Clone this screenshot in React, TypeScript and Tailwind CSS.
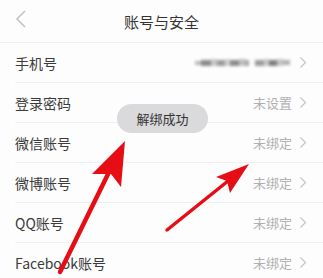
import React from "react";

const rows = [
  { label: "手机号", value: "" },
  { label: "登录密码", value: "未设置" },
  { label: "微信账号", value: "未绑定" },
  { label: "微博账号", value: "未绑定" },
  { label: "QQ账号", value: "未绑定" },
  { label: "Facebook账号", value: "未绑定" },
];

function Chevron() {
  return (
    <svg width="8" height="13" viewBox="0 0 8 13" className="ml-[7px]">
      <path d="M1.5 1.5 L6.5 6.5 L1.5 11.5" fill="none" stroke="#c4c4c4" strokeWidth="1.2" />
    </svg>
  );
}

export default function App() {
  return (
    <div
      className="relative w-[323px] h-[278px] overflow-hidden bg-[#fdfdfd]"
      style={{ fontFamily: '"Noto Sans CJK SC", "Noto Sans", sans-serif' }}
    >
      <div className="relative h-[43px] flex items-center justify-center border-b border-[#efefef]">
        <svg width="12" height="20" viewBox="0 0 12 20" className="absolute left-[15px] top-[9px]">
          <path d="M10 2 L2 10 L10 18" fill="none" stroke="#c0c0c0" strokeWidth="1.5" />
        </svg>
        <span className="text-[15px] text-[#333] leading-none">账号与安全</span>
      </div>
      <div className="flex flex-col">
        {rows.map((r, i) => (
          <div key={i} className="ml-[15px] h-[40px] flex items-center border-b border-[#f0f0f0] pr-[16px]">
            <span className="text-[14px] text-[#3a3a3a] leading-none">{r.label}</span>
            <div className="flex-1" />
            {i === 0 ? (
              <div className="flex items-center gap-[6px] blur-[1.6px] mr-[2px]">
                <div className="flex items-center h-[9px]">
                  <div className="w-[6px] h-[4px] bg-[#b8b8b8]" />
                  <div className="w-[10px] h-[6px] bg-[#8a8a8a]" />
                  <div className="w-[6px] h-[7px] bg-[#c8c8c8]" />
                  <div className="w-[8px] h-[6px] bg-[#9a9a9a]" />
                  <div className="w-[5px] h-[7px] bg-[#cfcfcf]" />
                  <div className="w-[9px] h-[6px] bg-[#8a8a8a]" />
                  <div className="w-[6px] h-[7px] bg-[#c0c0c0]" />
                  <div className="w-[4px] h-[6px] bg-[#a8a8a8]" />
                </div>
                <div className="flex items-center h-[9px]">
                  <div className="w-[9px] h-[6px] bg-[#9c9c9c]" />
                  <div className="w-[5px] h-[7px] bg-[#c8c8c8]" />
                  <div className="w-[8px] h-[6px] bg-[#7e7e7e]" />
                  <div className="w-[6px] h-[7px] bg-[#c4c4c4]" />
                  <div className="w-[7px] h-[5px] bg-[#b0b0b0]" />
                </div>
              </div>
            ) : (
              <span className="text-[13px] text-[#b0b0b0] leading-none">{r.value}</span>
            )}
            <Chevron />
          </div>
        ))}
      </div>
      <div className="absolute left-[117px] top-[104px] w-[91px] h-[29px] rounded-full bg-[#dadadc] flex items-center justify-center">
        <span className="text-[13px] text-[#333] leading-none">解绑成功</span>
      </div>
      <svg className="absolute left-0 top-0" width="323" height="278" viewBox="0 0 323 278">
        <line x1="60" y1="272" x2="110" y2="170" stroke="#e60d14" strokeWidth="4.5" strokeLinecap="round" />
        <polygon points="125,141 92,174 111,174 121,187" fill="#e60d14" />
        <line x1="167" y1="230" x2="228" y2="181" stroke="#e60d14" strokeWidth="3.5" strokeLinecap="round" />
        <polygon points="249,164 216,177 227,181 230,193" fill="#e60d14" />
      </svg>
    </div>
  );
}
